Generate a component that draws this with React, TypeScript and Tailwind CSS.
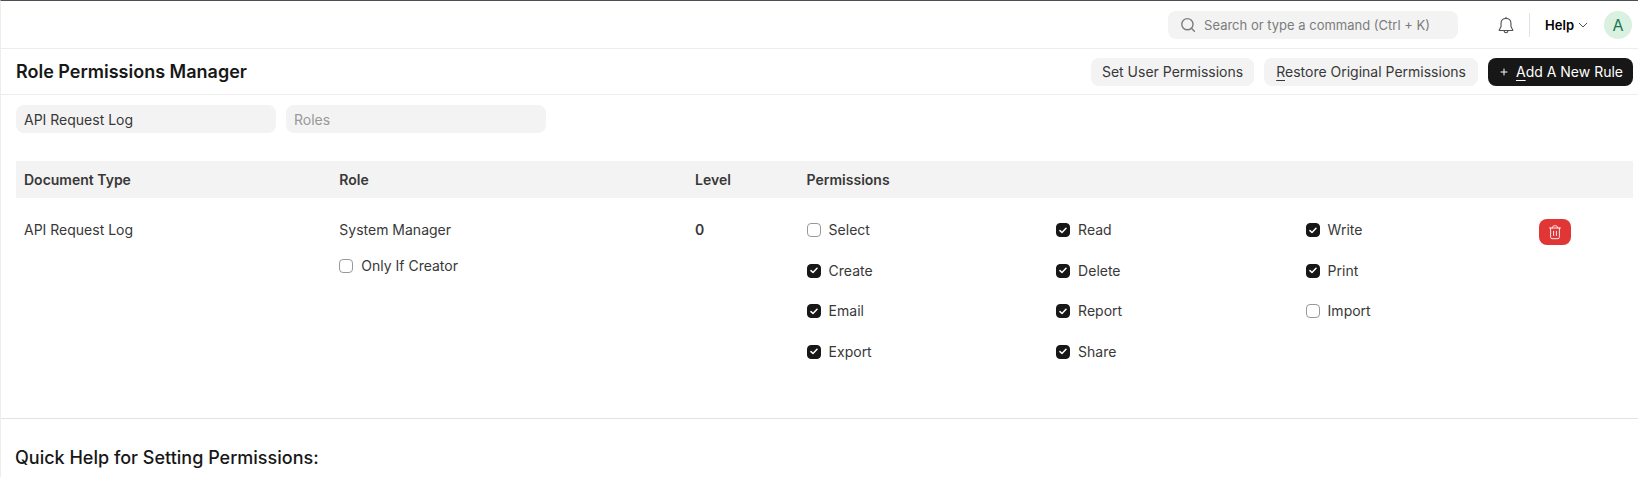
import { useState } from "react";

type Permission = { name: string; on: boolean };

const permissions: Permission[] = [
  { name: "Select", on: false },
  { name: "Read", on: true },
  { name: "Write", on: true },
  { name: "Create", on: true },
  { name: "Delete", on: true },
  { name: "Print", on: true },
  { name: "Email", on: true },
  { name: "Report", on: true },
  { name: "Import", on: false },
  { name: "Export", on: true },
  { name: "Share", on: true },
];

function Check({ label, initial }: { label: string; initial: boolean }) {
  const [on, setOn] = useState(initial);
  return (
    <label className="inline-flex h-5 items-center gap-2">
      <span className="grid size-[14px] place-items-center">
        <input
          type="checkbox"
          checked={on}
          onChange={() => setOn(!on)}
          className="col-start-1 row-start-1 size-[14px] appearance-none rounded-[4px] border border-[#999999] bg-white checked:border-[#171717] checked:bg-[#171717]"
        />
        {on && (
          <svg
            viewBox="0 0 8 7"
            className="pointer-events-none col-start-1 row-start-1 h-[7px] w-2"
            fill="none"
            stroke="#ffffff"
            strokeWidth="1.5"
            strokeLinecap="round"
            strokeLinejoin="round"
          >
            <path d="M1 3.6 3 5.5 7 1.3" />
          </svg>
        )}
      </span>
      {label}
    </label>
  );
}

function Navbar() {
  return (
    <header className="flex h-12 items-center justify-end border-b border-[#ededed] pr-[6px]">
      <label className="flex h-7 w-[290px] items-center gap-2 rounded-lg bg-[#f3f3f3] px-3">
        <svg viewBox="0 0 16 16" className="size-4 shrink-0" fill="none" stroke="#7c7c7c" strokeWidth="1.4" strokeLinecap="round">
          <circle cx="7.4" cy="7.2" r="5.6" />
          <path d="m11.4 11.3 3 3" />
        </svg>
        <input
          type="text"
          aria-label="Search"
          placeholder="Search or type a command (Ctrl + K)"
          className="min-w-0 flex-1 bg-transparent text-[13px] outline-none placeholder:text-[#7c7c7c]"
        />
      </label>
      <button type="button" aria-label="Notifications" className="mr-[14px] ml-[39px]">
        <svg viewBox="0 0 16 16" className="size-[18px]" fill="none" stroke="#525252" strokeLinecap="round" strokeLinejoin="round">
          <path d="M8 1.2v.9M8 2.1c-2.6 0-4.4 1.900-4.400 4.300v3L2 12.400c-.1.300 0 .5.300.5h11.400c.3 0 .4-.2.300-.5l-1.600-3v-3C12.400 4 10.600 2.100 8 2.100Z" />
          <path d="M6.300 13.200c.1 1 .8 1.700 1.700 1.700s1.600-.7 1.700-1.700" />
        </svg>
      </button>
      <span className="h-6 w-px bg-[#e2e2e2]" />
      <button type="button" className="ml-[15px] flex items-center gap-1 text-[13px] font-semibold text-black">
        Help
        <svg viewBox="0 0 10 10" className="size-[10px]" fill="none" stroke="#525252" strokeLinecap="round" strokeLinejoin="round">
          <path d="M1.200 3.200 5 7l3.800-3.800" />
        </svg>
      </button>
      <button type="button" aria-label="Account" className="ml-4 grid size-7 place-items-center rounded-full bg-[#daf0e1] text-base text-[#16794c]">
        A
      </button>
    </header>
  );
}

function PageHead() {
  const button = "h-7 rounded-lg text-sm leading-7";
  return (
    <div className="flex h-[46px] items-center justify-between border-b border-[#ededed] pr-[5px] pl-[15px]">
      <h1 className="text-lg font-semibold text-[#171717]">Role Permissions Manager</h1>
      <div className="flex gap-[10px]">
        <button type="button" className={button + " bg-[#f3f3f3] px-[11px]"}>
          Set User Permissions
        </button>
        <button type="button" className={button + " bg-[#f3f3f3] px-3"}>
          <u className="underline-offset-3">R</u>estore Original Permissions
        </button>
        <button type="button" className={button + " flex items-center bg-[#171717] px-[10px] text-white"}>
          <svg viewBox="0 0 12 12" className="mr-[6px] size-3" fill="none" stroke="#ffffff" strokeLinecap="round">
            <path d="M6 3v6M3 6h6" />
          </svg>
          <span>
            <u className="underline-offset-3">A</u>dd A New Rule
          </span>
        </button>
      </div>
    </div>
  );
}

export default function App() {
  const field =
    "h-7 w-[260px] rounded-lg bg-[#f3f3f3] px-2 text-sm text-[#383838] outline-none placeholder:text-[#999999]";
  return (
    <div className="min-h-screen border-t border-l border-t-[#4a4f57] border-l-[#ededed] bg-white font-[Inter,sans-serif] text-sm leading-5 text-[#383838]">
      <Navbar />
      <PageHead />
      <main>
        <div className="flex gap-[10px] pt-[10px] pr-[5px] pl-[15px]">
          <input type="text" aria-label="Document Type" defaultValue="API Request Log" className={field} />
          <input type="text" aria-label="Role" placeholder="Roles" className={field} />
        </div>
        <div className="pt-7 pr-[5px] pl-[15px]">
          <table className="w-full table-fixed text-left">
            <thead className="bg-[#f3f3f3]">
              <tr className="h-[37px]">
                <th className="w-[19.5%] px-2 font-semibold">Document Type</th>
                <th className="w-[22%] px-2 font-semibold">Role</th>
                <th className="w-[6.9%] px-2 font-semibold">Level</th>
                <th className="w-[45.3%] px-2 font-semibold">Permissions</th>
                <th className="w-[6.3%] px-2" aria-label="Actions" />
              </tr>
            </thead>
            <tbody>
              <tr className="align-top">
                <td className="px-2 pt-[22px]">API Request Log</td>
                <td className="px-2 pt-[22px]">
                  <div className="flex flex-col items-start gap-4">
                    System Manager
                    <Check label="Only If Creator" initial={false} />
                  </div>
                </td>
                <td className="px-2 pt-[22px] font-semibold">0</td>
                <td className="pt-[22px] pl-2">
                  <div className="-mr-6 grid h-[142px] grid-cols-3 content-between">
                    {permissions.map((p) => (
                      <Check key={p.name} label={p.name} initial={p.on} />
                    ))}
                  </div>
                </td>
                <td className="px-2 pt-[21px]">
                  <button type="button" aria-label="Delete rule" className="grid h-[26px] w-8 place-items-center rounded-lg bg-[#e03636]">
                    <svg viewBox="0 0 16 16" className="size-4" fill="none" stroke="#ffffff" strokeWidth="0.9" strokeLinecap="round" strokeLinejoin="round">
                      <path d="M2.500 4h11M3.600 4v9.300c0 .8.600 1.400 1.400 1.400h6c.8 0 1.400-.6 1.400-1.400V4M5.300 3.800c0-1.200.800-2 2-2h1.400c1.200 0 2 .8 2 2M6.600 7.300v4.200M9.400 7.300v4.200" />
                    </svg>
                  </button>
                </td>
              </tr>
            </tbody>
          </table>
        </div>
        <section className="mt-14 border-t border-[#e2e2e2] pt-[25px] pl-[14px]">
          <h2 className="text-lg font-medium text-[#171717]">Quick Help for Setting Permissions:</h2>
        </section>
      </main>
    </div>
  );
}
